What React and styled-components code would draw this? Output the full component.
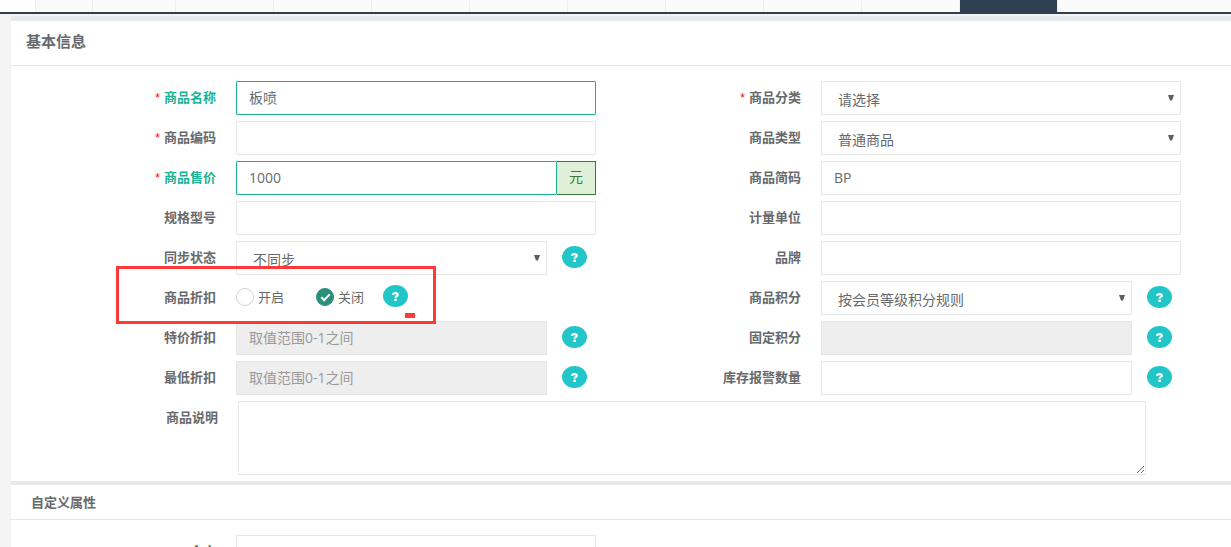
import React from "react";
import styled, { createGlobalStyle, css } from "styled-components";

const Global = createGlobalStyle`
  *, *::before, *::after { box-sizing: border-box; }
  body {
    margin: 0;
    background: #f3f3f4;
    color: #676a6c;
    font-family: "Open Sans", "Noto Sans CJK SC", sans-serif;
    font-size: 13px;
    line-height: 18px;
  }
  input, select, textarea, button { font: inherit; color: inherit; margin: 0; }
`;

const Page = styled.div`
  height: 100vh;
  overflow: hidden;
`;

const TabBar = styled.nav`
  display: flex;
  height: 14px;
  background: #fafafa;
  border-bottom: 2px solid #2f4050;
`;

const Tab = styled.button`
  flex: none;
  width: ${(p) => p.$width}px;
  padding: 0;
  border: 0;
  border-right: 1px solid #eee;
  background: ${(p) => (p.$active ? "#2f4050" : p.$home ? "#fff" : "#fafafa")};
`;

const Main = styled.main`
  padding: 2px 0 0 11px;
`;

const Panel = styled.section`
  background: #fff;
  border-top: ${(p) => p.$bar}px solid #e7eaec;
`;

const PanelTitle = styled.h2`
  margin: 0;
  padding: ${(p) => (p.$small ? "8px 20px" : "10px 15px 14px")};
  border-bottom: 1px solid #e7e7e7;
  font-size: ${(p) => (p.$small ? 13 : 15)}px;
  line-height: ${(p) => (p.$small ? 18 : 20)}px;
  font-weight: 700;
`;

const Form = styled.form`
  padding: 15px 35px 6px 15px;
`;

const Columns = styled.div`
  display: grid;
  grid-template-columns: 1fr 1fr;
`;

const Column = styled.div`
  display: flex;
  flex-direction: column;
  gap: 6px;
`;

const Row = styled.div`
  display: grid;
  grid-template-columns: 1fr 2fr;
  min-height: 34px;
`;

const WideRow = styled.div`
  display: grid;
  grid-template-columns: 21fr 100fr;
  padding: 6px 35px 0 0;
`;

const Label = styled.label`
  padding: 7px 5px 0 0;
  text-align: right;
  font-weight: 700;
  color: ${(p) => (p.$valid ? "#1ab394" : "inherit")};
`;

const Star = styled.span`
  margin-right: 4px;
  color: #f00;
  font-size: 12px;
  font-family: "Liberation Sans", sans-serif;
  font-weight: 400;
`;

const Control = styled.div`
  display: flex;
  align-items: ${(p) => (p.$choices ? "center" : "flex-start")};
  padding: ${(p) => (p.$choices ? "0 15px 2px" : "0 15px")};
`;

const field = css`
  flex: 1;
  min-width: 0;
  width: 100%;
  height: 34px;
  border: 1px solid ${(p) => (p.$valid ? "#1ab394" : "#e5e6e7")};
  border-radius: 1px;
  background: #fff;
  font-size: 14px;
  line-height: 20px;
  outline: 0;
`;

const TextInput = styled.input`
  ${field}
  padding: 5px 12px 7px;
  &:disabled { background: #eee; }
  &::placeholder { color: #999; opacity: 1; }
`;

const TextArea = styled.textarea`
  ${field}
  display: block;
  height: 74px;
  padding: 6px 12px;
  resize: both;
`;

const SelectBox = styled.div`
  position: relative;
  flex: 1;
  min-width: 0;
`;

const NativeSelect = styled.select`
  ${field}
  display: block;
  appearance: none;
  padding: 8px 16px 4px;
`;

const Arrow = styled.svg`
  position: absolute;
  top: 14px;
  right: 7px;
  pointer-events: none;
`;

const Addon = styled.span`
  width: 39px;
  height: 34px;
  padding: 5px 0 7px;
  border: 1px solid #3c763d;
  border-left: 0;
  background: #dff0d8;
  color: #3c763d;
  font-size: 14px;
  line-height: 20px;
  text-align: center;
`;

const HelpButton = styled.button`
  display: flex;
  align-items: center;
  justify-content: center;
  flex: none;
  width: 25px;
  height: 22px;
  margin: ${(p) => (p.$inline ? "0 0 2px 19px" : "5px 9px 0 15px")};
  padding: 0;
  border: 0;
  border-radius: 50%;
  background: #23c6c8;
`;

const Choice = styled.label`
  display: flex;
  align-items: center;
  gap: 4px;
  margin-right: ${(p) => (p.$last ? 0 : 32)}px;
`;

const Radio = styled.input`
  appearance: none;
  display: grid;
  place-items: center;
  width: 18px;
  height: 18px;
  border: 1px solid #d5d5cf;
  border-radius: 50%;
  background: #fff;
  &:checked { border-color: #2b8f7b; background: #2b8f7b; }
  &:checked::before {
    content: "";
    width: 9px;
    height: 5px;
    margin-bottom: 2px;
    border-left: 2px solid #fff;
    border-bottom: 2px solid #fff;
    transform: rotate(-45deg);
  }
`;

const MarkedRow = styled(Row)`
  position: relative;
`;

const Marker = styled.div`
  position: absolute;
  top: -15px;
  left: 90px;
  width: 320px;
  height: 58px;
  border: 3px solid #fc3a3a;
  pointer-events: none;
  &::after {
    content: "";
    position: absolute;
    right: 18px;
    bottom: 3px;
    width: 10px;
    height: 5px;
    background: #fc3a3a;
  }
`;

function Help({ inline }) {
  return (
    <HelpButton type="button" aria-label="帮助" $inline={inline}>
      <svg width="7" height="9" viewBox="0 0 7 9" fill="none" aria-hidden="true">
        <path d="M.8 2.8C1 1.6 2 1.1 3.4 1.1C5 1.1 5.8 1.7 5.8 2.7C5.8 4.1 3.6 3.9 3.6 5.8" stroke="#fff" strokeWidth="2.1" />
        <path d="M2.3 6.8h2.6v2.1H2.3z" fill="#fff" />
      </svg>
    </HelpButton>
  );
}

function Field({ id, label, required, valid, help, children }) {
  return (
    <Row>
      <Label htmlFor={id} $valid={valid}>
        {required && <Star>*</Star>}
        {label}
      </Label>
      <Control>
        {children}
        {help && <Help />}
      </Control>
    </Row>
  );
}

function Select({ id, value }) {
  return (
    <SelectBox>
      <NativeSelect id={id} defaultValue={value}>
        <option>{value}</option>
      </NativeSelect>
      <Arrow width="6" height="6" viewBox="0 0 6 6" aria-hidden="true">
        <path d="M0 0h6L4 5.5H2z" fill="#5c5f61" />
      </Arrow>
    </SelectBox>
  );
}

const tabs = [36, 57, 83, 98, 98, 98, 98, 98, 98, 98, 98];

export default function App() {
  return (
    <Page>
      <Global />
      <TabBar>
        {tabs.map((width, i) => (
          <Tab key={i} type="button" $width={width} $home={i === 0} />
        ))}
        <Tab type="button" $width={98} $active />
      </TabBar>
      <Main>
        <Panel $bar={5}>
          <PanelTitle>基本信息</PanelTitle>
          <Form>
            <Columns>
              <Column>
                <Field id="name" label="商品名称" required valid>
                  <TextInput id="name" defaultValue="板喷" $valid />
                </Field>
                <Field id="code" label="商品编码" required>
                  <TextInput id="code" />
                </Field>
                <Field id="price" label="商品售价" required valid>
                  <TextInput id="price" defaultValue="1000" $valid />
                  <Addon>元</Addon>
                </Field>
                <Field id="spec" label="规格型号">
                  <TextInput id="spec" />
                </Field>
                <Field id="sync" label="同步状态" help>
                  <Select id="sync" value="不同步" />
                </Field>
                <MarkedRow role="radiogroup" aria-labelledby="discount">
                  <Label as="span" id="discount">商品折扣</Label>
                  <Control $choices>
                    <Choice>
                      <Radio type="radio" name="discount" />
                      开启
                    </Choice>
                    <Choice $last>
                      <Radio type="radio" name="discount" defaultChecked />
                      关闭
                    </Choice>
                    <Help inline />
                  </Control>
                  <Marker />
                </MarkedRow>
                <Field id="special" label="特价折扣" help>
                  <TextInput id="special" placeholder="取值范围0-1之间" disabled />
                </Field>
                <Field id="lowest" label="最低折扣" help>
                  <TextInput id="lowest" placeholder="取值范围0-1之间" disabled />
                </Field>
              </Column>
              <Column>
                <Field id="category" label="商品分类" required>
                  <Select id="category" value="请选择" />
                </Field>
                <Field id="type" label="商品类型">
                  <Select id="type" value="普通商品" />
                </Field>
                <Field id="short" label="商品简码">
                  <TextInput id="short" defaultValue="BP" />
                </Field>
                <Field id="unit" label="计量单位">
                  <TextInput id="unit" />
                </Field>
                <Field id="brand" label="品牌">
                  <TextInput id="brand" />
                </Field>
                <Field id="points" label="商品积分" help>
                  <Select id="points" value="按会员等级积分规则" />
                </Field>
                <Field id="fixed" label="固定积分" help>
                  <TextInput id="fixed" disabled />
                </Field>
                <Field id="stock" label="库存报警数量" help>
                  <TextInput id="stock" />
                </Field>
              </Column>
            </Columns>
            <WideRow>
              <Label htmlFor="description">商品说明</Label>
              <Control>
                <TextArea id="description" />
              </Control>
            </WideRow>
          </Form>
        </Panel>
        <Panel $bar={4}>
          <PanelTitle $small>自定义属性</PanelTitle>
          <Form>
            <Columns>
              <Column>
                <Field id="validity" label="全文">
                  <TextInput id="validity" />
                </Field>
              </Column>
            </Columns>
          </Form>
        </Panel>
      </Main>
    </Page>
  );
}
